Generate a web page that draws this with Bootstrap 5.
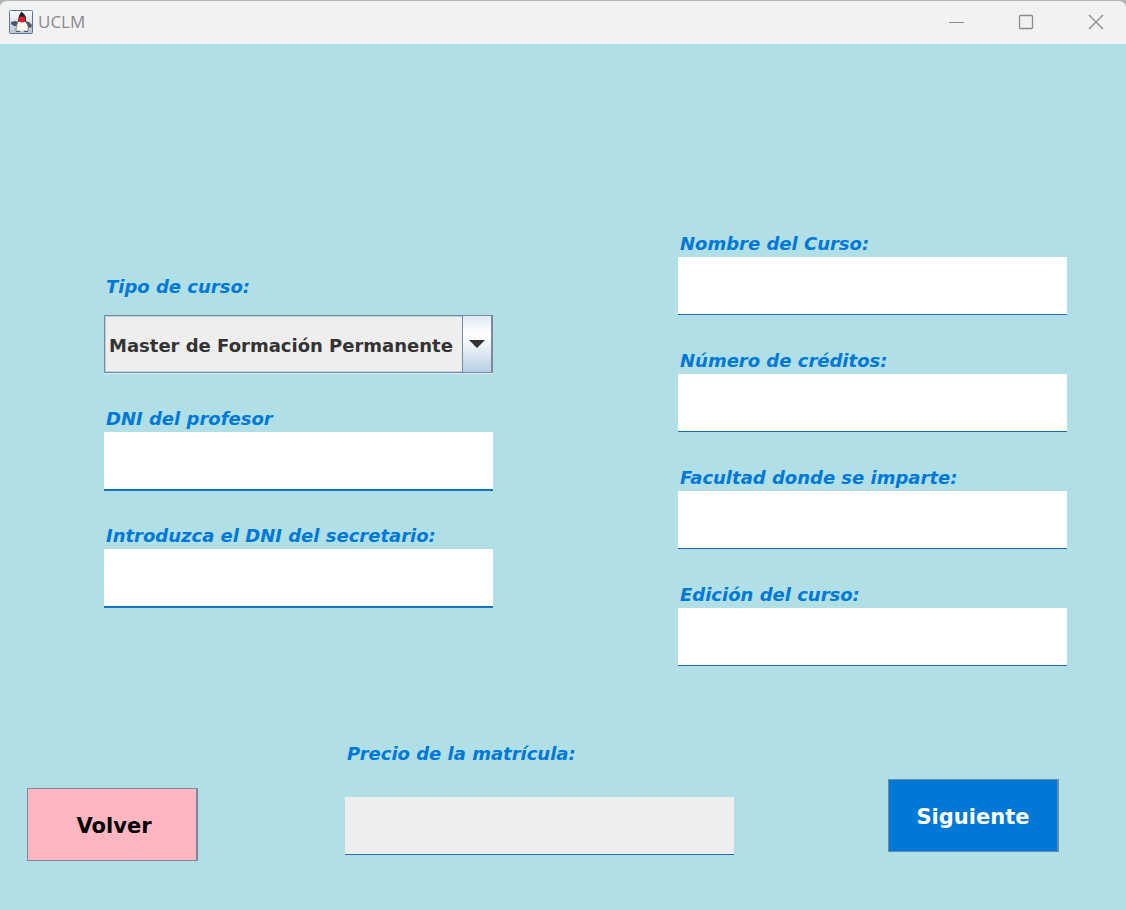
<!DOCTYPE html>
<html lang="es">
<head>
<meta charset="utf-8">
<meta name="viewport" content="width=device-width, initial-scale=1">
<title>UCLM</title>
<link href="https://cdn.jsdelivr.net/npm/bootstrap@5.3.0/dist/css/bootstrap.min.css" rel="stylesheet">
<style>
  body { background: #b0dfe5; font-family: "DejaVu Sans", sans-serif; }
  .title-frame { background: #b4b4b4; }
  .title-bar { background: #f2f2f2; border-top: 1px solid #b4b4b4; border-radius: 7px 7px 0 0; height: 44px; padding: 0 0 2px 9px; color: #8a8a8a; }
  .title-text { font-family: "Open Sans", sans-serif; font-size: 17px; line-height: 24px; margin-left: 5px; }
  .win-controls { column-gap: 10px; }
  .win-btn { width: 60px; height: 40px; padding: 0; border: 0; background: transparent; color: #8a8a8a; line-height: 1; }
  .form-area { padding: 186px 59px 0 104px; column-gap: 185px; }
  .form-side { flex: 1 1 0; min-width: 0; }
  .form-side.first { padding-top: 43px; }
  .field-label { color: #0078d7; font-size: 18px; font-weight: bold; font-style: italic; line-height: 27px; padding-left: 2px; margin: 0; display: block; }
  .field { margin-bottom: 32px; }
  .line-input { height: 58px; border: 0; border-bottom: 1px solid #1b6fb8; border-radius: 0; background: #fff; }
  .line-input:disabled { background: #eee; }
  .first .line-input { height: 59px; border-bottom: 2px solid #0f74c4; margin-bottom: -1px; }
  .combo { margin-top: 15px; }
  .combo-select { appearance: none; height: 58px; border: 1px solid #7a8a99; border-right-width: 2px; border-radius: 0; background: #eee; box-shadow: inset 0 0 0 1px #b8cfe5, 0 1px 0 #dcecf3; color: #333; font-size: 18px; font-weight: bold; padding: 2px 32px 0 4px; }
  .combo-arrow { top: 1px; right: 2px; bottom: 1px; width: 29px; border-left: 1px solid #7a8a99; background: linear-gradient(#dde8f3, #fff 30%, #fff 35%, #b8cfe5); pointer-events: none; }
  .action-area { padding: 65px 67px 49px 27px; }
  .action-btn { width: 171px; height: 73px; border: 1px solid #7a8a99; border-right-width: 2px; border-radius: 0; font-size: 21px; font-weight: bold; padding: 4px 0 0; }
  .btn-back, .btn-back:hover { background: #ffb6c1; color: #000; border-color: #7a8a99; }
  .btn-next, .btn-next:hover { background: #0078d7; color: #fff; border-color: #6a8aa5; }
  .btn-back { margin-top: 57px; padding-left: 4px; }
  .btn-next { margin-top: 48px; }
  .price { flex: 1 1 0; margin: 9px 154px 0 147px; }
  .price .line-input { margin-top: 30px; }
</style>
</head>
<body>
<div class="title-frame">
<header class="title-bar d-flex align-items-center">
  <svg width="24" height="24" viewBox="0 0 24 24" aria-hidden="true">
    <defs><linearGradient id="tile" x1="0" y1="0" x2="0" y2="1"><stop offset="0" stop-color="#fff"/><stop offset="1" stop-color="#b7c4d3"/></linearGradient></defs>
    <rect x=".5" y=".5" width="23" height="23" rx="1" fill="url(#tile)" stroke="#5c7896"/>
    <path d="M2 12l4-1 4 1-1 4-4 0-3-2zM16 11l4 1 3 3-1 3-3-1-3-2z" fill="#4a5661"/>
    <path d="M12 1.500c2 1 4 3 5 6v5H9c0-4 1-8 3-10.500z" fill="#20242a"/>
    <path d="M9 12c2-1 6-1 8 0 2 3 3 6 2 9l-4-1-2 1-3-1-3 1c0-4 0-6 2-9z" fill="#f8f6ef"/>
    <path d="M9 13c-2 3-2 5-2 8M17 12c2 3 3 6 2 9" fill="none" stroke="#5d666e" stroke-width=".8"/>
    <ellipse cx="13" cy="9.500" rx="3.500" ry="3" fill="#df1d28"/>
    <path d="M7 21.500h4M15 21.500h4" stroke="#555" stroke-width="1"/>
  </svg>
  <span class="title-text me-auto">UCLM</span>
  <div class="win-controls d-flex">
    <button class="win-btn" type="button" aria-label="Minimizar"><svg width="16" height="16" viewBox="0 0 16 16"><path d="M1 8.500h15" stroke="currentColor"/></svg></button>
    <button class="win-btn" type="button" aria-label="Maximizar"><svg width="16" height="16" viewBox="0 0 16 16"><rect x="1.500" y="1.500" width="13" height="13" rx="1" fill="none" stroke="currentColor" stroke-width="1.300"/></svg></button>
    <button class="win-btn" type="button" aria-label="Cerrar"><svg width="16" height="16" viewBox="0 0 16 16"><path d="M1 1l14 14M15 1L1 15" stroke="currentColor" stroke-width="1.300"/></svg></button>
  </div>
</header>
</div>
<main>
  <form>
    <div class="form-area d-flex">
      <div class="form-side first">
        <div class="field">
          <label class="field-label" for="tipo">Tipo de curso:</label>
          <div class="combo position-relative">
            <select class="combo-select d-block w-100" id="tipo"><option>Master de Formación Permanente</option></select>
            <span class="combo-arrow position-absolute d-flex align-items-center justify-content-center"><svg width="16" height="8" viewBox="0 0 16 8" aria-hidden="true"><path d="M0 0h16L8 8z" fill="#333"/></svg></span>
          </div>
        </div>
        <div class="field">
          <label class="field-label" for="profesor">DNI del profesor</label>
          <input class="form-control line-input" id="profesor" type="text">
        </div>
        <div class="field">
          <label class="field-label" for="secretario">Introduzca el DNI del secretario:</label>
          <input class="form-control line-input" id="secretario" type="text">
        </div>
      </div>
      <div class="form-side">
        <div class="field">
          <label class="field-label" for="nombre">Nombre del Curso:</label>
          <input class="form-control line-input" id="nombre" type="text">
        </div>
        <div class="field">
          <label class="field-label" for="creditos">Número de créditos:</label>
          <input class="form-control line-input" id="creditos" type="text">
        </div>
        <div class="field">
          <label class="field-label" for="facultad">Facultad donde se imparte:</label>
          <input class="form-control line-input" id="facultad" type="text">
        </div>
        <div class="field mb-0">
          <label class="field-label" for="edicion">Edición del curso:</label>
          <input class="form-control line-input" id="edicion" type="text">
        </div>
      </div>
    </div>
    <div class="action-area d-flex align-items-start">
      <button class="btn action-btn btn-back" type="button">Volver</button>
      <div class="price">
        <label class="field-label" for="precio">Precio de la matrícula:</label>
        <input class="form-control line-input" id="precio" type="text" disabled>
      </div>
      <button class="btn action-btn btn-next" type="button">Siguiente</button>
    </div>
  </form>
</main>
<script src="https://cdn.jsdelivr.net/npm/bootstrap@5.3.0/dist/js/bootstrap.bundle.min.js"></script>
</body>
</html>
